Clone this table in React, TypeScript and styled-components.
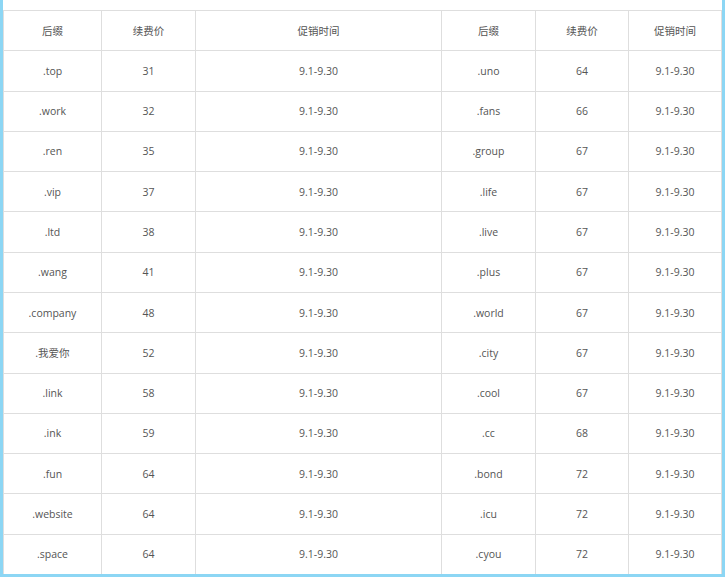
import styled, { createGlobalStyle } from "styled-components"

const GlobalStyle = createGlobalStyle`
    html, body {
        margin: 0;
        padding: 0;
        background: #fff;
    }
`

const Frame = styled.section`
    box-sizing: border-box;
    width: 725px;
    height: 577px;
    padding-top: 10px;
    border: 3px solid #8cd6f4;
    border-top: none;
    background: #fff;
    overflow: hidden;
`

const Grid = styled.div`
    display: grid;
    grid-template-columns: 98px 94px 246px 94px 93px 93px;
    grid-template-rows: repeat(14, 1fr);
    height: 565px;
    box-sizing: border-box;
    border-left: 1px solid #dedede;
    border-top: 1px solid #dedede;
    font-family: "Open Sans", "Noto Sans CJK SC", sans-serif;
    font-size: 10.5px;
    color: #555;
`

const Cell = styled.div`
    display: flex;
    align-items: center;
    justify-content: center;
    border-right: 1px solid #dedede;
    border-bottom: 1px solid #dedede;
    white-space: nowrap;
`

const headers = ["后缀", "续费价", "促销时间", "后缀", "续费价", "促销时间"]

type Row = [string, string, string, string]

const rows: Row[] = [
    [".top", "31", ".uno", "64"],
    [".work", "32", ".fans", "66"],
    [".ren", "35", ".group", "67"],
    [".vip", "37", ".life", "67"],
    [".ltd", "38", ".live", "67"],
    [".wang", "41", ".plus", "67"],
    [".company", "48", ".world", "67"],
    [".我爱你", "52", ".city", "67"],
    [".link", "58", ".cool", "67"],
    [".ink", "59", ".cc", "68"],
    [".fun", "64", ".bond", "72"],
    [".website", "64", ".icu", "72"],
    [".space", "64", ".cyou", "72"],
]

const period = "9.1-9.30"

export default function App() {
    return (
        <Frame>
            <GlobalStyle />
            <Grid>
                {headers.map((h, i) => (
                    <Cell key={"h" + i}>{h}</Cell>
                ))}
                {rows.map(([a, pa, b, pb]) =>
                    [a, pa, period, b, pb, period].map((v, i) => (
                        <Cell key={a + i}>{v}</Cell>
                    ))
                )}
            </Grid>
        </Frame>
    )
}
